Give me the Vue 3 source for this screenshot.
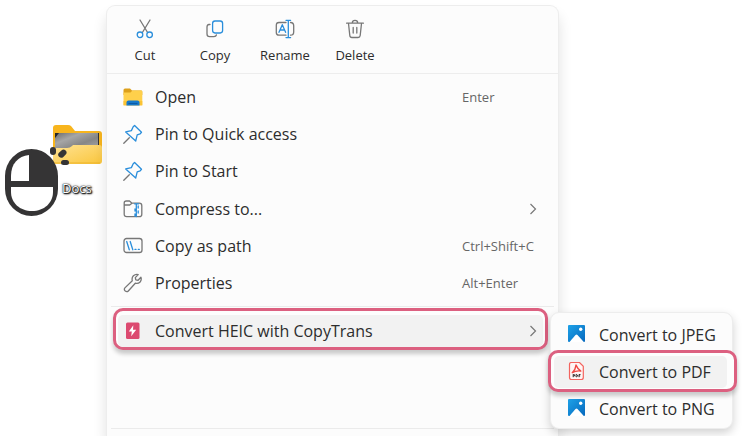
<script setup>
const actions = [
  { id: 'cut', label: 'Cut' },
  { id: 'copy', label: 'Copy' },
  { id: 'rename', label: 'Rename' },
  { id: 'delete', label: 'Delete' },
]

const items = [
  { label: 'Open', icon: 'folder', shortcut: 'Enter' },
  { label: 'Pin to Quick access', icon: 'pin' },
  { label: 'Pin to Start', icon: 'pin' },
  { label: 'Compress to...', icon: 'zip', submenu: true },
  { label: 'Copy as path', icon: 'path', shortcut: 'Ctrl+Shift+C' },
  { label: 'Properties', icon: 'wrench', shortcut: 'Alt+Enter' },
]

const formats = [
  { label: 'Convert to JPEG', icon: 'image' },
  { label: 'Convert to PDF', icon: 'pdf', active: true },
  { label: 'Convert to PNG', icon: 'image' },
]
</script>

<template>
  <main class="desktop">
    <figure class="shortcut-icon">
      <svg class="scene" viewBox="0 0 106 100" aria-hidden="true">
        <defs>
          <linearGradient id="folderFront" x1="0" y1="0" x2="1" y2="1">
            <stop offset="0" stop-color="#ffe293" />
            <stop offset="1" stop-color="#fac63c" />
          </linearGradient>
          <linearGradient id="photo" x1="0" y1="0" x2="1" y2="1">
            <stop offset="0" stop-color="#6c6c6c" />
            <stop offset=".3" stop-color="#a6a6a6" />
            <stop offset=".6" stop-color="#868686" />
            <stop offset="1" stop-color="#b0b0b0" />
          </linearGradient>
          <linearGradient id="sky" x1="0" y1="0" x2="1" y2="1">
            <stop offset="0" stop-color="#1ea2e8" />
            <stop offset="1" stop-color="#0668bd" />
          </linearGradient>
        </defs>
        <path d="M53 8q0-3 3-3h12q2 0 3 1l4 5h24q3 0 3 3v25H53z" fill="#f8b51d" />
        <path d="M55 13h44v18H55z" fill="url(#photo)" />
        <path d="M55 13h4l-4 5z" fill="#262626" />
        <path d="M98 13h1v14h-1z" fill="#333" />
        <path d="M53 28h14q3 0 5-2l1-1h26q3 0 3 3v13q0 3-3 3H56q-3 0-3-3z" fill="url(#folderFront)" />
        <path d="M54 43h46" stroke="#edb42b" stroke-width="1" />
        <rect x="5" y="29" width="53" height="67" rx="26.5" ry="27" fill="#353435" />
        <path d="M29 35v26H11v-5c0-12 7-20 18-21z" fill="#fff" />
        <path d="M11 67h42v5c0 11-9 19-21 19s-21-8-21-19z" fill="#fff" />
        <rect x="50" y="27" width="6" height="8" rx="3" fill="#353435" />
        <rect x="58" y="31" width="9" height="6" rx="3" transform="rotate(-43 62 34)" fill="#353435" />
        <rect x="61" y="40" width="8" height="5" rx="2.5" fill="#353435" />
      </svg>
      <figcaption>Docs</figcaption>
    </figure>

    <section class="menu" aria-label="Context menu">
      <div class="toolbar">
        <button v-for="a in actions" :key="a.id" type="button" class="action">
          <svg viewBox="0 0 20 20" class="icon" aria-hidden="true">
            <g v-if="a.id === 'cut'">
              <path d="M5 1l7.6 12.5M15 1L7.4 13.5" class="grey" />
              <circle cx="5" cy="15.8" r="2.8" class="blue" />
              <circle cx="14.6" cy="15.8" r="2.8" class="blue" />
            </g>
            <g v-else-if="a.id === 'copy'">
              <path d="M5 5.5H4Q2 5.5 2 8v7q0 2.6 2.6 2.6H9q2 0 2.4-1.6" class="grey" />
              <rect x="7.6" y="2" width="10" height="12" rx="2.4" class="blue" />
            </g>
            <g v-else-if="a.id === 'rename'">
              <path d="M11 3.500H4Q1.300 3.500 1.300 6.200v7.300q0 2.700 2.700 2.700h7M15.500 3.500q3.200 0 3.200 3.200V13q0 3.200-3.200 3.200" class="grey" />
              <path d="M4 13.300l3.300-7.600 3.300 7.600M5 11h4.600M13.300 1.500v17M11 1.300h4.600M11 18.600h4.600" class="blue" />
            </g>
            <g v-else>
              <path d="M1.600 4.200h16.800M7.300 4q0-2.600 2.700-2.600T12.700 4M3.500 4.500l1.300 12q.2 2 2.200 2h6q2 0 2.200-2l1.300-12M8.200 8.500v5.500M11.800 8.500v5.500" class="grey" />
            </g>
          </svg>
          <span>{{ a.label }}</span>
        </button>
      </div>

      <ul class="items">
        <li v-for="item in items" :key="item.label">
          <button type="button" class="row">
            <svg viewBox="0 0 20 20" class="icon" aria-hidden="true">
              <g v-if="item.icon === 'folder'">
                <path d="M.5 3q0-1.500 1.500-1.500h5L9 3.500h9q1.300 0 1.300 1.300V8H.5z" fill="#dda01b" />
                <path d="M.5 5.500h7L9.500 3.500H18q1.300 0 1.300 1.300V18H.5z" fill="#ffd04b" />
                <path d="M.5 14h18.800v4.500H.5z" fill="#fbc334" />
                <path d="M3.500 18.500v-3q0-2 2-2h9q2 0 2 2v3z" fill="#1679cc" />
                <path d="M5.500 16.500h9" stroke="#0a5aa5" stroke-width="1.200" />
              </g>
              <g v-else-if="item.icon === 'pin'">
                <path d="M6.300 13.700L.8 19.200" class="grey" />
                <path d="M11.600 1.500l6.900 6.800-1.300 1.500-3 1-1.500 6.200L2.700 7.900l5.700-1.300 1.800-3.800z" class="blue" />
              </g>
              <g v-else-if="item.icon === 'zip'">
                <path d="M1.200 6V4Q1.200 2 3.200 2h3.300l2.500 2.200h7.300q2.500 0 2.500 2.500v8.500q0 2.500-2.500 2.500H3.700q-2.500 0-2.500-2.500zM1.200 6h5.500L9 4.200" class="grey" />
                <path d="M11.600 4.800h4M13.300 5v12.500M15.200 7v2M12 10v2M15.200 12v2M12 15v2" class="blue" />
              </g>
              <g v-else-if="item.icon === 'path'">
                <rect x="1" y="2.500" width="18" height="14" rx="2.600" class="grey" />
                <path d="M3.700 5.500l2.600 8.300M7.200 5.500l2.600 8.300M12 13.400h1M15.300 13.400h1" class="blue" />
              </g>
              <path v-else class="grey" d="M17.900 4.300q1 2.500-.8 4.700-2 2-4.800 1.200L5.300 18q-1.400 1.300-3 .1-1.700-1.500-.4-3.200l7.400-7.100q-.8-3 1.100-5 2.200-2 4.800-1.200l-2.900 3 .5 2.300 2.300.4z" />
            </svg>
            <span class="label">{{ item.label }}</span>
            <kbd v-if="item.shortcut">{{ item.shortcut }}</kbd>
            <svg v-if="item.submenu" viewBox="0 0 8 12" class="chevron" aria-hidden="true"><path d="M1.500 1l5 5-5 5" /></svg>
          </button>
        </li>
      </ul>

      <div class="convert">
        <button type="button" class="ring">
          <span class="row fill">
            <svg viewBox="0 0 20 20" class="icon" aria-hidden="true">
              <rect x="3" y="1.500" width="13.500" height="16.500" rx="1.500" fill="#dc4a70" />
              <path d="M10.300 4.300L5.800 10.500h3l-.6 4.800 5-6.500h-3.200z" fill="#fff" />
            </svg>
            <span class="label">Convert HEIC with CopyTrans</span>
            <svg viewBox="0 0 8 12" class="chevron" aria-hidden="true"><path d="M1.500 1l5 5-5 5" /></svg>
          </span>
        </button>

        <ul class="submenu">
          <li v-for="f in formats" :key="f.label">
            <button type="button" :class="f.active ? 'ring' : 'plain'">
              <span class="format" :class="{ fill: f.active }">
                <svg viewBox="0 0 20 20" class="icon" aria-hidden="true">
                  <g v-if="f.icon === 'image'">
                    <rect x="1" y="0" width="17" height="17" rx="1" fill="url(#sky)" />
                    <path d="M2.500 17L8.500 10q1-1 2 0l6.300 7z" fill="#fff" />
                    <circle cx="13.700" cy="4.300" r="1.700" fill="#fff" />
                  </g>
                  <g v-else>
                    <path d="M4.500 .5h8l3.800 3.800v11.200q0 2-2 2H4.500q-2 0-2-2v-13q0-2 2-2z" fill="#fff6f5" stroke="#f3645f" stroke-width="1.200" />
                    <path d="M9 3q1.300 3.500 4.800 6-4.500-.7-8.600 1.700Q8.500 8 9 3z" fill="none" stroke="#ef4843" stroke-width="1.400" stroke-linejoin="round" />
                    <path d="M6.200 12.200v3M6.200 12.700h1.300v1.200H6.200M9 12.500v2.300h.8l.6-.6v-1.200l-.6-.5zM12 15.200v-2.700h1.500M12 13.900h1.200" fill="none" stroke="#373030" stroke-width="1" />
                  </g>
                </svg>
                <span>{{ f.label }}</span>
              </span>
            </button>
          </li>
        </ul>
      </div>

      <div class="rest"></div>
    </section>
  </main>
</template>

<style>
body {
  background: #fff;
}
</style>

<style scoped>
.desktop {
  display: grid;
  grid-template-columns: 106px minmax(0, 453px) minmax(185px, 1fr);
  height: 100vh;
  padding-top: 5px;
  box-sizing: border-box;
  overflow: hidden;
  font-family: "Open Sans", "Noto Sans", sans-serif;
  color: #2d2d2d;
}

.shortcut-icon {
  display: grid;
  align-content: start;
  margin: 0;
  padding-top: 115px;
}

.scene,
.shortcut-icon figcaption {
  grid-area: 1 / 1;
}

.scene {
  width: 100%;
  display: block;
}

.shortcut-icon figcaption {
  align-self: end;
  padding: 0 0 23px 62px;
  font-size: 13px;
  line-height: 18px;
  color: #fff;
  text-shadow: 0 0 1px #111, 0 0 1px #111, 1px 1px 1px #222, 1px 1px 2px #333, 0 0 3px #777;
}

.menu {
  display: flex;
  flex-direction: column;
  border: 1px solid #ededed;
  border-bottom: 0;
  border-radius: 9px 9px 0 0;
  background: #fcfcfc;
  box-shadow: 0 10px 14px rgba(0, 0, 0, 0.12);
}

ul {
  list-style: none;
  margin: 0;
  padding: 0;
}

button {
  display: block;
  width: 100%;
  margin: 0;
  padding: 0;
  border: 0;
  background: none;
  font: inherit;
  color: inherit;
  text-align: left;
  box-sizing: border-box;
}

.icon {
  flex: none;
  width: 20px;
  height: 20px;
}

.grey,
.blue {
  fill: none;
  stroke: #777;
  stroke-width: 1.3;
  stroke-linecap: round;
  stroke-linejoin: round;
}

.blue {
  stroke: #2a8edb;
}

.toolbar {
  display: flex;
  padding: 13px 3px 7px;
  border-bottom: 1px solid #ededed;
}

.action {
  display: flex;
  flex-direction: column;
  align-items: center;
  gap: 6px;
  width: 70px;
  font-size: 13px;
  line-height: 21px;
}

.items {
  display: grid;
  grid-auto-rows: 1fr;
  height: 224px;
  margin: 4px 4px 0;
  padding-bottom: 4px;
  border-bottom: 1px solid #ebebeb;
}

.row,
.format {
  display: flex;
  align-items: center;
  gap: 12px;
  height: 100%;
  font-size: 16px;
  line-height: 24px;
}

.row {
  padding-left: 12px;
}

.label {
  flex: 1;
  white-space: nowrap;
}

kbd {
  width: 92px;
  font-family: inherit;
  font-size: 13px;
  color: #666;
  white-space: nowrap;
}

.chevron {
  width: 8px;
  height: 12px;
  margin-right: 17px;
  fill: none;
  stroke: #777;
  stroke-width: 1.2;
}

.convert {
  position: relative;
  margin: 1px 10px 0 6px;
}

.ring {
  height: 42px;
  padding: 4px 2px 0;
  border: 3px solid #dc6080;
  border-radius: 10px;
  background: #fdfdfd;
  box-shadow: 0 4px 4px rgba(0, 0, 0, 0.2);
}

.fill {
  border-radius: 5px;
  background: #f2f2f2;
}

.ring .row {
  padding-left: 5px;
}

.ring .chevron {
  margin-right: 6px;
}

.submenu {
  position: absolute;
  top: 4px;
  left: calc(100% + 2px);
  width: 183px;
  box-sizing: border-box;
  padding: 3px 0 1px;
  border: 1px solid #ededed;
  border-radius: 9px;
  background: #fcfcfc;
  box-shadow: 0 4px 10px rgba(0, 0, 0, 0.18);
}

.plain {
  height: 37px;
  padding-left: 16px;
}

.submenu .ring {
  position: relative;
  width: 189px;
  margin: -3px -5px -2px -3px;
  padding: 3px 7px 1px 3px;
}

.format {
  white-space: nowrap;
}

.submenu .fill {
  padding-left: 13px;
}

.rest {
  height: 78px;
  margin: 0 4px;
  border-bottom: 1px solid #ebebeb;
}
</style>
